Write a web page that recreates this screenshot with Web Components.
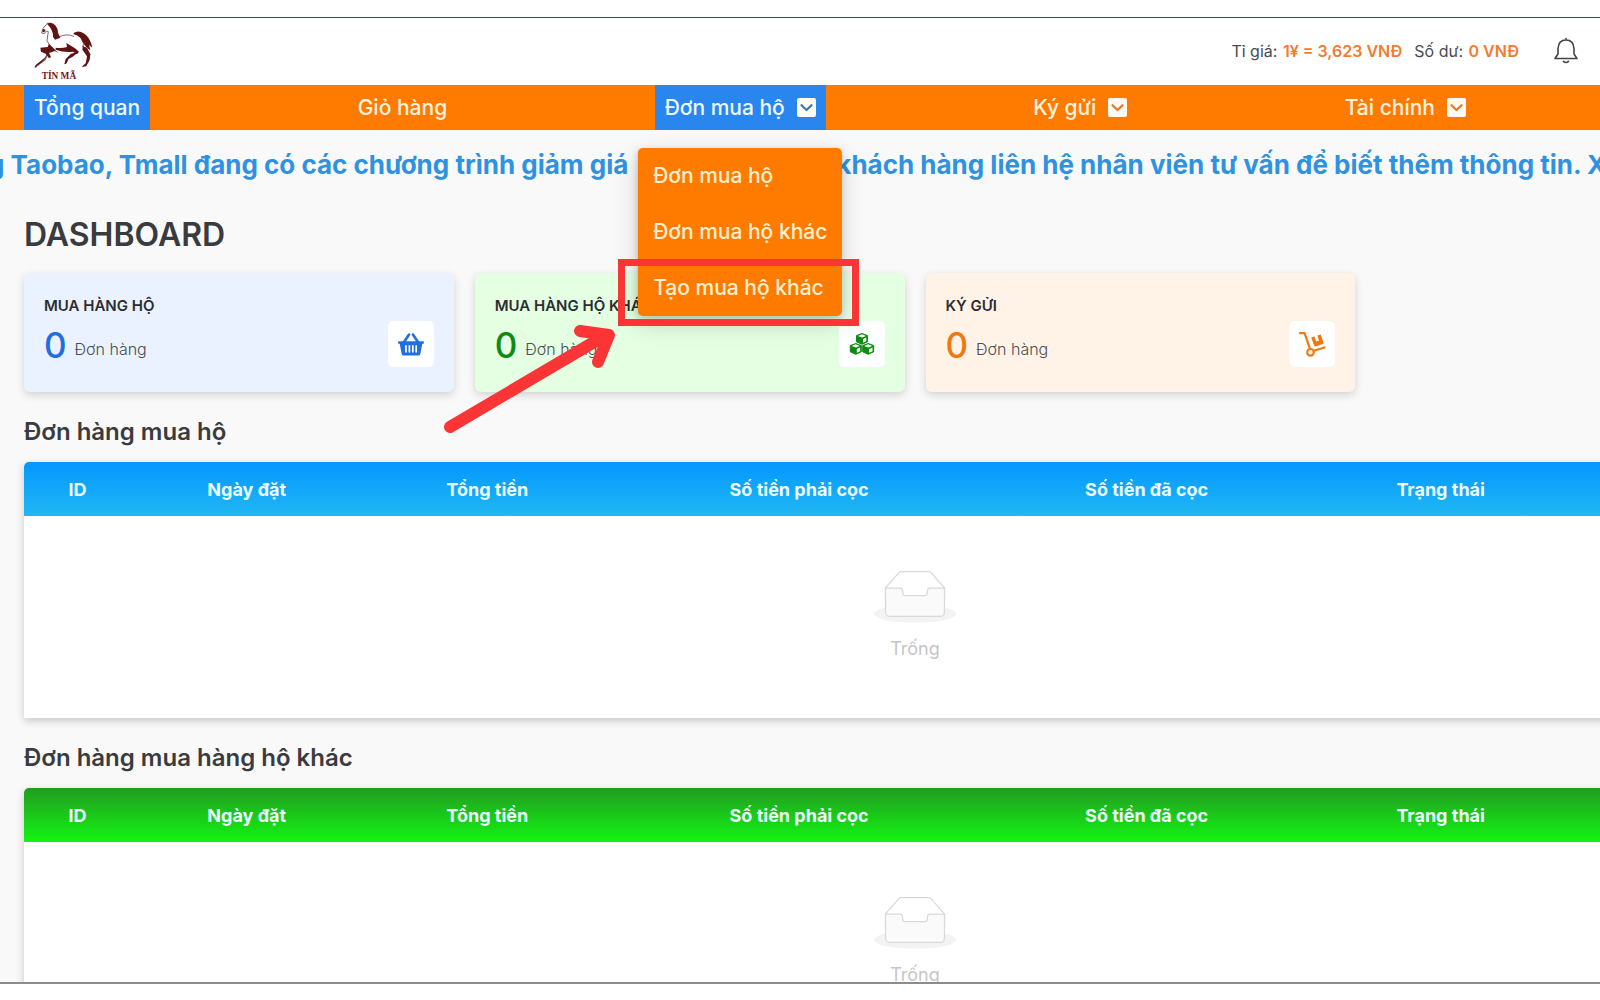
<!DOCTYPE html>
<html lang="vi">
<head>
<meta charset="utf-8">
<title>Tín Mã - Dashboard</title>
<style>
  html, body { margin: 0; height: 100%; overflow: hidden; background: #fff; }
  body { font-family: Inter, "Noto Sans", sans-serif; color: #3a3b3f; font-size: 16px; }
</style>
</head>
<body>
<tm-app>
  <tm-header slot="top"></tm-header>
  <tm-nav slot="top">
    <tm-nav-item active>Tổng quan</tm-nav-item>
    <tm-nav-item>Giỏ hàng</tm-nav-item>
    <tm-nav-item active menu>Đơn mua hộ
      <tm-menu slot="menu"></tm-menu>
    </tm-nav-item>
    <tm-nav-item menu>Ký gửi</tm-nav-item>
    <tm-nav-item menu>Tài chính</tm-nav-item>
  </tm-nav>
  <tm-ticker slot="top">
    <span>g Taobao, Tmall đang có các chương trình giảm giá</span>
    <span>khách hàng liên hệ nhân viên tư vấn để biết thêm thông tin. X</span>
  </tm-ticker>

  <tm-cards>
    <tm-card color="#1f6fe0" tint="#eaf2ff" icon="basket" heading="MUA HÀNG HỘ" count="0"></tm-card>
    <tm-card color="#0f8a12" tint="#e4ffe2" icon="cubes" heading="MUA HÀNG HỘ KHÁC" count="0"></tm-card>
    <tm-card color="#f0780f" tint="#fff3e8" icon="dolly" heading="KÝ GỬI" count="0"></tm-card>
  </tm-cards>
  <tm-orders heading="Đơn hàng mua hộ" from="#0597ff" to="#20b7f2"></tm-orders>
  <tm-orders heading="Đơn hàng mua hàng hộ khác" from="#229c22" to="#12f412"></tm-orders>
  <tm-callout slot="over"></tm-callout>
</tm-app>

<script>
const define = (name, render) => customElements.define(name, class extends HTMLElement {
  connectedCallback() {
    if (!this.shadowRoot) this.attachShadow({ mode: 'open' }).innerHTML = render(this);
  }
});

const icons = {
  basket: `<svg width="28" height="24" viewBox="0 0 28 24" fill="none" stroke="currentColor">
    <path d="M1.2 9.2h25.6v2.6h-1.5l-2 10.2q-.3 1.6-1.9 1.6H6.600q-1.600 0-1.900-1.600L2.700 11.800H1.200z" fill="currentColor" stroke="none"/>
    <path d="M7.200 9.700 12.100 2.600M20.800 9.700 15.900 2.600" stroke-width="2.600" stroke-linecap="round"/>
    <path d="M9 13.800v6M12.400 13.800v6M15.800 13.800v6M19.200 13.800v6" stroke="#fff" stroke-width="1.700" stroke-linecap="round"/></svg>`,
  cubes: `<svg width="26" height="24" viewBox="0 0 26 24">
    <g fill="currentColor" stroke="currentColor" stroke-width="1" stroke-linejoin="round">
      <path d="M13 1.500 18.500 3.600V9.800L13 12.300 7.500 9.800V3.600z"/>
      <path d="M6.800 11.500 12.300 13.600V19.800L6.800 22.300 1.300 19.800V13.600z"/>
      <path d="M19.200 11.500 24.700 13.600V19.800L19.200 22.300 13.700 19.800V13.600z"/></g>
    <g fill="#fff">
      <path d="M13 2.300 17 3.900 13 5.500 9 3.900zM14 7 17.300 5.600V9.200L14 10.700z"/>
      <path d="M6.800 12.300 10.800 13.900 6.800 15.500 2.800 13.900zM7.800 17 11.100 15.600V19.200L7.800 20.700z"/>
      <path d="M19.200 12.300 23.200 13.900 19.200 15.500 15.200 13.900zM20.200 17 23.500 15.600V19.200L20.200 20.700z"/></g></svg>`,
  dolly: `<svg width="28" height="26" viewBox="0 0 28 26" fill="none" stroke="currentColor" stroke-width="2.200" stroke-linecap="round" stroke-linejoin="round">
    <path d="M2 2.200h4.600l5.300 15.500M15.800 19.800 26.500 16.500"/>
    <circle cx="12.500" cy="21.300" r="3.300"/>
    <path d="M13.200 6.500 16.500 5.400l1.600 5 2.900-1-1.600-5 3.300-1 2.900 8.300q.3 1-.7 1.400l-7.200 2.400q-1.100.3-1.400-.7z" fill="currentColor" stroke="none"/></svg>`
};

define('tm-app', () => `
  <style>
    :host { display: flex; flex-direction: column; height: 100vh; padding: 17px 0 16px; box-sizing: border-box; position: relative; overflow: hidden; }
    .frame { flex: 1; min-height: 0; border-top: 1px solid #43475c; border-bottom: 2px solid #8c8c8c; overflow: hidden; background: #f9f9f9; }
    main { box-sizing: border-box; width: 115%; padding: 17px 34px 0 24px; }
    h1 { margin: 0 0 19px; font-size: 32px; line-height: 38px; font-weight: 600; }
  </style>
  <div class="frame">
    <slot name="top"></slot>
    <main><h1>DASHBOARD</h1><slot></slot></main>
  </div>
  <slot name="over"></slot>`);

define('tm-header', () => `
  <style>
    :host { display: flex; align-items: center; justify-content: space-between; box-sizing: border-box; height: 67px; padding: 0 21px 2px 31px; background: #fff; }
    .logo { display: block; }
    .info { display: flex; align-items: center; gap: 12px; font-size: 16px; color: #4a4b50; }
    b { font-weight: 600; color: #f47a30; margin-left: 1px; }
    button { border: 0; background: none; padding: 0; margin-left: 22px; color: #43444a; display: flex; }
  </style>
  <a class="logo" href="#" aria-label="Tín Mã">
    <svg width="66" height="62" viewBox="30 9 198 186">
      <g fill="none" stroke="#8a6464" stroke-width="3" stroke-linejoin="round" stroke-linecap="round">
        <path d="M80 24 66 40 62 54 70 56 76 48 82 50 78 76 84 88M112 66q26-12 46-2M182 74q10 12 4 22"/>
        <path d="M82 110 72 134 50 150 44 156" stroke-width="5"/>
        <path d="M164 112 142 128 136 142M186 94 206 118 200 142 188 152" stroke-width="4"/>
      </g>
      <g fill="#5f1414">
        <path d="M78 26q14-8 26 6 8 10 8 24l6 12-16 6-6-8q2-20-18-40z"/>
        <path d="M66 42l8 2-4 8-6-2z"/>
        <path d="M158 54q14-10 32 2 14 10 20 28l4 14-10-8 4 16q-16-10-22-24-8-20-28-24z"/>
        <path d="M84 86l-4 10-22 2 2 12 14 6 10 14 6-4-6-12 18-6 10 6z"/>
        <path d="M104 98q20 2 34-2l-2-12 26 16 12 10-6 8-12-8q-24 4-52-6z"/>
        <path d="M150 116l22-4-18 14-12 6-6 14-6 2 4-16z"/>
        <path d="M186 94l12 4 10 20-2 16-10 20-14 2 12-10 4-22-14-20z"/>
        <path d="M78 122l-14 18-24 18 4-8 18-14z"/>
      </g>
      <text x="62" y="192" font-family="Liberation Serif, serif" font-weight="700" font-size="28" fill="#741616">TÍN MÃ</text>
    </svg>
  </a>
  <div class="info">
    <span>Tỉ giá: <b>1¥ = 3,623 VNĐ</b></span>
    <span>Số dư: <b>0 VNĐ</b></span>
    <button type="button" aria-label="Thông báo">
      <svg width="26" height="28" viewBox="0 0 26 28" fill="none" stroke="currentColor" stroke-width="1.600" stroke-linecap="round" stroke-linejoin="round">
        <path d="M13 1.500v1.500M13 3q7.500 0 8 8.500v5.500l3 4.500H2L5 17v-5.500Q5.500 3 13 3z"/><path d="M10.500 24.300q2.500 2.400 5 0"/>
      </svg>
    </button>
  </div>`);

define('tm-nav', () => `
  <style>
    :host { display: block; background: #ff7b00; }
    nav { display: flex; justify-content: space-between; height: 45px; padding: 0 124px 0 24px; }
  </style>
  <nav><slot></slot></nav>`);

define('tm-nav-item', el => {
  const menu = el.hasAttribute('menu');
  const tag = menu ? 'button type="button"' : 'a href="#"';
  return `
  <style>
    :host { display: block; position: relative; }
    .item { display: flex; align-items: center; gap: 12px; height: 100%; box-sizing: border-box; padding: 0 10px; border: 0;
      background: none; color: #fff3e0; font: 500 21px/24px Inter, "Noto Sans", sans-serif; text-decoration: none; white-space: nowrap; }
    :host([active]) .item { background: #2986ee; color: #effaff; }
    .item svg { color: #fffaf2; --tick: #e8762a; }
    :host([active]) .item svg { --tick: #3577b8; }
    .over { position: absolute; z-index: 2; top: 100%; left: 50%; transform: translateX(-50%); padding-top: 18px; }
  </style>
  <${tag} class="item"><span><slot></slot></span>${menu ? `
    <svg width="19" height="19" viewBox="0 0 19 19"><rect width="19" height="19" rx="2" fill="currentColor"/>
      <path d="M4.500 7.200 9.500 12l5-4.800" fill="none" stroke="var(--tick)" stroke-width="2.200" stroke-linecap="round" stroke-linejoin="round"/></svg>` : ''}
  </${menu ? 'button' : 'a'}>
  <div class="over"><slot name="menu"></slot></div>`;
});

define('tm-menu', () => `
  <style>
    :host { display: block; background: #ff7b00; border-radius: 5px; box-shadow: 0 8px 24px rgba(0,0,0,.16), 0 2px 6px rgba(0,0,0,.14); }
    ul { list-style: none; margin: 0; padding: 0; }
    a { display: block; padding: 0 15px; font-size: 21px; line-height: 56px; font-weight: 500; color: #fff0d0; text-decoration: none; white-space: nowrap; }
  </style>
  <ul><li><a href="#">Đơn mua hộ</a></li><li><a href="#">Đơn mua hộ khác</a></li><li><a href="#">Tạo mua hộ khác</a></li></ul>`);

define('tm-ticker', () => `
  <style>
    :host { display: flex; gap: 208px; height: 69px; align-items: center; margin-left: -12px;
      font-size: 26px; font-weight: 700; color: #2f92e0; white-space: nowrap; }
    ::slotted(span) { flex: none; }
  </style>
  <slot></slot>`);

define('tm-cards', () => `
  <style>:host { display: grid; grid-template-columns: repeat(4, 1fr); gap: 21px; }</style>
  <slot></slot>`);

define('tm-card', el => `
  <style>
    :host { display: flex; flex-direction: column; box-sizing: border-box; height: 119px; padding: 22px 20px 0; border-radius: 6px;
      background: ${el.getAttribute('tint')}; box-shadow: 0 3px 8px rgba(0,0,0,.16); }
    h3 { margin: 0; font-size: 15px; line-height: 22px; font-weight: 600; color: #2c2d31; }
    .row { display: flex; justify-content: space-between; }
    p { display: flex; align-items: flex-end; gap: 8px; margin: 4px 0 0; line-height: 36px; font-weight: 300; color: #4c4d52; }
    strong { font-size: 35px; line-height: 44px; font-weight: 500; color: ${el.getAttribute('color')}; }
    .icon { display: flex; align-items: center; justify-content: center; width: 46px; height: 46px; margin-top: 4px;
      background: #fff; border-radius: 5px; color: ${el.getAttribute('color')}; }
  </style>
  <h3>${el.getAttribute('heading')}</h3>
  <div class="row"><p><strong>${el.getAttribute('count')}</strong><span>Đơn hàng</span></p><div class="icon">${icons[el.getAttribute('icon')]}</div></div>`);

define('tm-orders', el => `
  <style>
    :host { display: block; }
    h2 { margin: 24px 0 14px; font-size: 24px; line-height: 32px; font-weight: 600; }
    table { width: 100%; table-layout: fixed; border-collapse: collapse; background: #fff; border-radius: 5px 5px 0 0; overflow: hidden; }
    .box { border-radius: 5px 5px 0 0; box-shadow: 0 3px 8px rgba(0,0,0,.2); }
    thead { background: linear-gradient(${el.getAttribute('from')}, ${el.getAttribute('to')}); }
    th { height: 54px; padding: 0; font-size: 18px; font-weight: 700; color: #ecfcff; text-align: center; }
    td { height: 202px; padding: 0; text-align: center; vertical-align: top; color: #c6c6c6; font-size: 18px; line-height: 24px; }
    svg { display: block; margin: 54px auto 14px; }
  </style>
  <h2 id="h">${el.getAttribute('heading')}</h2>
  <div class="box"><table aria-labelledby="h">
    <colgroup><col style="width:6%"><col style="width:13%"><col style="width:14%"><col style="width:21%"><col style="width:18%"><col style="width:15%"><col style="width:13%"></colgroup>
    <thead><tr><th>ID</th><th>Ngày đặt</th><th>Tổng tiền</th><th>Số tiền phải cọc</th><th>Số tiền đã cọc</th><th>Trạng thái</th><th></th></tr></thead>
    <tbody><tr><td colspan="7">
      <svg width="82" height="53" viewBox="0 0 64 41"><g transform="translate(0 1)" fill="none" fill-rule="evenodd"><ellipse cx="32" cy="33" rx="32" ry="7" fill="#f3f3f3"/>
      <g stroke="#d9d9d9"><path fill="#fff" d="M55 12.760L44.854 1.258C44.367.474 43.656 0 42.907 0H21.093c-.749 0-1.460.474-1.947 1.257L9 12.761V22h46v-9.240z"/>
      <path fill="#fafafa" d="M41.613 15.931c0-1.605.994-2.930 2.227-2.931H55v18.137C55 33.260 53.680 35 52.050 35h-40.100C10.320 35 9 33.259 9 31.137V13h11.160c1.233 0 2.227 1.323 2.227 2.928v.022c0 1.605 1.005 2.901 2.237 2.901h14.752c1.232 0 2.237-1.308 2.237-2.913v-.007z"/></g></g></svg>
      Trống</td></tr></tbody>
  </table></div>`);

define('tm-callout', () => `
  <style>
    :host { position: absolute; z-index: 5; left: 440px; top: 250px; pointer-events: none; }
    svg { display: block; }
  </style>
  <svg width="430" height="190" viewBox="440 250 430 190" fill="none" stroke="#fb3535">
    <rect x="621.500" y="262.500" width="234" height="60" stroke-width="7"/>
    <path d="M450 427 606 335M580 331 609 335 598 362" stroke-width="12" stroke-linecap="round" stroke-linejoin="round"/>
  </svg>`);
</script>
</body>
</html>
